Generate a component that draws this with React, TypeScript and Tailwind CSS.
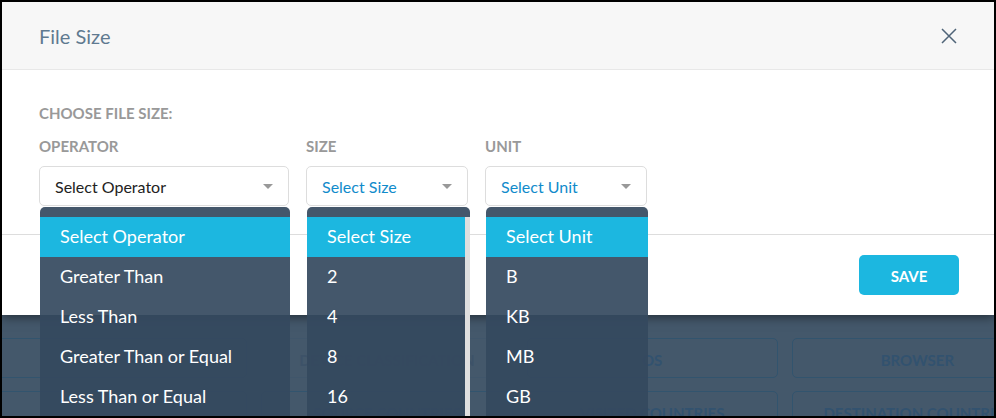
import React, { useState } from "react";

type FieldProps = {
  id: string;
  label: string;
  options: string[];
  width: string;
  tone: string;
  menu: string;
  scrollbar?: boolean;
};

function Field({ id, label, options, width, tone, menu, scrollbar }: FieldProps) {
  const [value, setValue] = useState(options[0]);
  return (
    <div className={`relative ${width}`}>
      <label htmlFor={id} className="block text-[15px] leading-5 font-bold text-[#999999]">
        {label}
      </label>
      <div className="relative mt-[10px]">
        <select
          id={id}
          value={value}
          onChange={(e) => setValue(e.target.value)}
          className={`block h-10 w-full appearance-none rounded-[5px] border border-[#dddddd] bg-white pt-[2px] pr-8 pl-[15px] text-base outline-none ${tone}`}
        >
          {options.map((o) => (
            <option key={o}>{o}</option>
          ))}
        </select>
        <svg
          viewBox="0 0 10 5"
          className="pointer-events-none absolute top-[18px] right-4 h-[5px] w-[10px] fill-[#999999]"
          aria-hidden="true"
        >
          <path d="M0 0h10L5 5z" />
        </svg>
      </div>
      <div
        className={`absolute top-full left-px z-10 mt-px h-[240px] overflow-hidden rounded-t-[5px] bg-[#34495e]/92 pt-[10px] ${menu}`}
      >
        <ul role="listbox" aria-label={label} className="text-lg leading-[38px] text-white">
          {options.map((o) => (
            <li
              key={o}
              role="option"
              aria-selected={o === value}
              onClick={() => setValue(o)}
              className={`h-10 cursor-pointer pl-5 ${o === value ? "bg-[#1cb7e0]" : ""}`}
            >
              {o}
            </li>
          ))}
        </ul>
        {scrollbar && <div className="absolute top-[10px] right-0 bottom-0 w-[5px] bg-[#dfdfdf]" />}
      </div>
    </div>
  );
}

const filters = [
  { name: "" },
  { name: "DEVICE CLASSIFICATION", muted: true },
  { name: "OS" },
  { name: "BROWSER" },
  { name: "" },
  { name: "SOURCE COUNTRIES" },
  { name: "VISITED COUNTRIES" },
  { name: "DESTINATION COUNTRIES" },
];

export default function App() {
  return (
    <div className="h-screen overflow-hidden border-2 border-black bg-[#44586b] font-['Lato',sans-serif]">
      <section role="dialog" aria-labelledby="title" className="relative bg-white shadow-[0_2px_10px_rgba(0,0,0,0.5)]">
        <header className="flex h-[68px] items-center justify-between border-b border-[#e8e8e8] bg-[#f7f7f7] pr-9 pl-[37px]">
          <h1 id="title" className="text-xl leading-6 text-[#5f7a90]">
            File Size
          </h1>
          <button type="button" aria-label="Close" className="p-px">
            <svg viewBox="0 0 16 16" className="h-4 w-4 stroke-[#4f6478]" fill="none" strokeWidth="1.5">
              <path d="M1 1l14 14M15 1L1 15" />
            </svg>
          </button>
        </header>
        <div className="border-b border-[#dddddd] px-[37px] pt-[33px] pb-7">
          <h2 className="text-[15px] leading-5 font-bold text-[#999999]">CHOOSE FILE SIZE:</h2>
          <div className="mt-[13px] flex gap-[17px]">
            <Field
              id="operator"
              label="OPERATOR"
              width="w-[250px]"
              menu="w-[250px]"
              tone="text-[#222222]"
              options={["Select Operator", "Greater Than", "Less Than", "Greater Than or Equal", "Less Than or Equal"]}
            />
            <Field
              id="size"
              label="SIZE"
              width="w-[162px]"
              menu="w-[163px]"
              tone="text-[#118bcb]"
              options={["Select Size", "2", "4", "8", "16"]}
              scrollbar
            />
            <Field
              id="unit"
              label="UNIT"
              width="w-[162px]"
              menu="w-[162px]"
              tone="text-[#118bcb]"
              options={["Select Unit", "B", "KB", "MB", "GB"]}
            />
          </div>
        </div>
        <footer className="flex justify-end py-5 pr-[35px]">
          <button type="button" className="h-10 w-[100px] rounded-[5px] bg-[#1cb7e0] pt-[2px] text-[15px] font-bold text-white">
            SAVE
          </button>
        </footer>
      </section>
      <div className="-mr-[49px] -ml-[6px] grid grid-cols-4 gap-x-[14px] gap-y-[13px] pt-[23px]">
        {filters.map((f, i) => (
          <button
            key={i}
            type="button"
            aria-label={f.name || "Filter"}
            className={`h-10 rounded-[5px] border pt-1 text-[15px] font-bold whitespace-nowrap ${
              f.muted ? "border-[#40566b] text-[#3d5268]" : "border-[#32546e] text-[#32526f]"
            }`}
          >
            {f.name}
          </button>
        ))}
      </div>
    </div>
  );
}
